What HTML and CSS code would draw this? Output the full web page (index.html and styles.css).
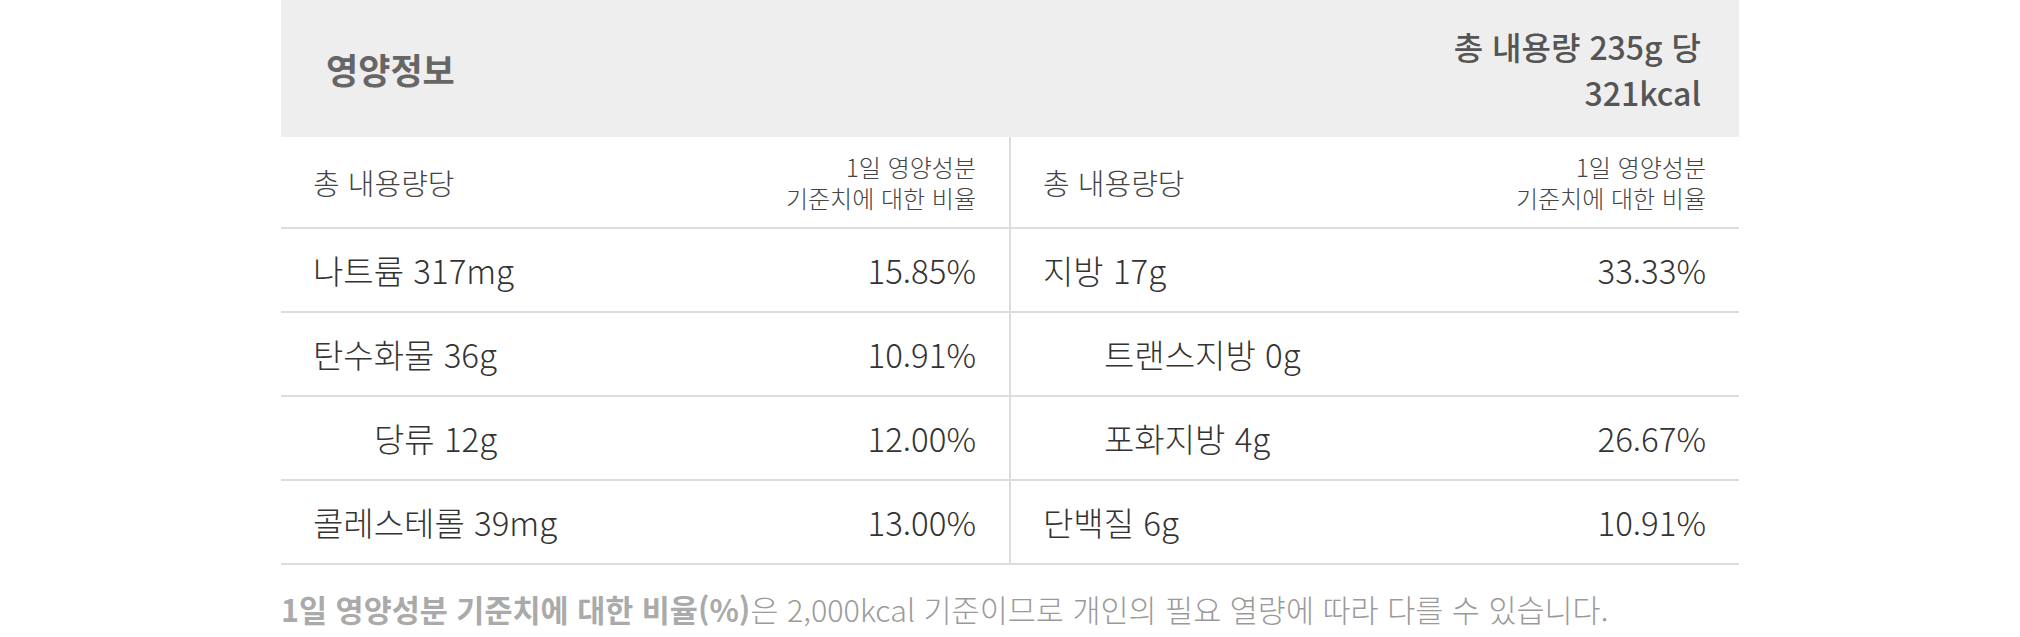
FILE: index.html
```html
<!DOCTYPE html>
<html lang="ko">
<head>
  <meta charset="UTF-8" />
  <meta name="viewport" content="width=device-width, initial-scale=1.0"/>
  <title>영양정보</title>
  <link rel="stylesheet" href="styles.css">
</head>
<body>

<div class="nutrition">
  <div class="nutrition-head">
    <h2>영양정보</h2>
    <p class="total">총 내용량 235g 당<br>321kcal</p>
  </div>

  <table class="nutrition-table">
    <thead>
      <tr>
        <th class="name">총 내용량당</th>
        <th class="ratio">1일 영양성분<br>기준치에 대한 비율</th>
        <th class="name half">총 내용량당</th>
        <th class="ratio">1일 영양성분<br>기준치에 대한 비율</th>
      </tr>
    </thead>
    <tbody>
      <tr>
        <td>나트륨 317mg</td>
        <td class="ratio">15.85%</td>
        <td class="half">지방 17g</td>
        <td class="ratio">33.33%</td>
      </tr>
      <tr>
        <td>탄수화물 36g</td>
        <td class="ratio">10.91%</td>
        <td class="half sub">트랜스지방 0g</td>
        <td class="ratio"></td>
      </tr>
      <tr>
        <td class="sub">당류 12g</td>
        <td class="ratio">12.00%</td>
        <td class="half sub">포화지방 4g</td>
        <td class="ratio">26.67%</td>
      </tr>
      <tr>
        <td>콜레스테롤 39mg</td>
        <td class="ratio">13.00%</td>
        <td class="half">단백질 6g</td>
        <td class="ratio">10.91%</td>
      </tr>
    </tbody>
  </table>

  <p class="note"><strong>1일 영양성분 기준치에 대한 비율(%)</strong>은 2,000kcal 기준이므로 개인의 필요 열량에 따라 다를 수 있습니다.</p>
</div>

</body>
</html>
```

FILE: styles.css
```css
body {
  margin: 0;
  background-color: #fff;
  font-family: "Noto Sans CJK KR", "Noto Sans", sans-serif;
  color: #333;
}

.nutrition {
  width: 1458px;
  margin: 0 auto;
}

.nutrition-head {
  display: flex;
  justify-content: space-between;
  align-items: center;
  height: 137px;
  padding: 0 38px 0 45px;
  box-sizing: border-box;
  background-color: #eeeeee;
  color: #555;
}

.nutrition-head h2 {
  margin: 0;
  font-size: 35px;
  font-weight: 700;
  color: #666;
}

.total {
  margin: 0;
  text-align: right;
  font-size: 32px;
  font-weight: 500;
  line-height: 46px;
}

.nutrition-table {
  width: 100%;
  border-collapse: collapse;
  table-layout: fixed;
}

th, td {
  border-bottom: 2px solid #ddd;
  padding: 0 33px 0 32px;
  text-align: left;
  font-weight: 300;
  white-space: nowrap;
}

th {
  height: 90px;
  font-size: 29px;
  color: #444;
}

th.ratio {
  font-size: 24px;
  line-height: 31px;
}

td {
  height: 82px;
  font-size: 33px;
  color: #333;
}

.ratio {
  text-align: right;
}

.half {
  border-left: 2px solid #ddd;
}

.sub {
  padding-left: 93px;
}

.note {
  margin: 22px 0 0;
  font-size: 30.5px;
  font-weight: 300;
  color: #9a9a9a;
}

.note strong {
  font-weight: 700;
  color: #aaa;
}
```
